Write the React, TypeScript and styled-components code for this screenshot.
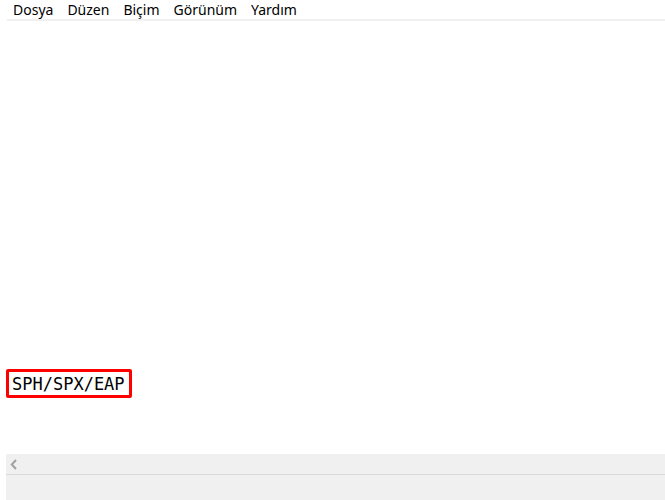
import React, { FC } from 'react';
import styled, { createGlobalStyle } from 'styled-components';

const GlobalStyle = createGlobalStyle`
  html, body {
    margin: 0;
    padding: 0;
    background: #ffffff;
  }
`;

const Window = styled.div`
  width: 665px;
  height: 500px;
  display: flex;
  flex-direction: column;
  background: #ffffff;
  overflow: hidden;
`;

const MenuBar = styled.ul`
  list-style: none;
  margin: 0 0 0 7px;
  padding: 0 0 0 6px;
  height: 19px;
  display: flex;
  align-items: center;
  gap: 14px;
  border-bottom: 2px solid #f0f0f0;
`;

const MenuItem = styled.li`
  font-family: 'Noto Sans', sans-serif;
  font-size: 14px;
  line-height: 19px;
  color: #000000;
  white-space: nowrap;
`;

const Editor = styled.div`
  flex: 1;
  padding: 348px 0 0 6px;
`;

const Highlight = styled.div`
  display: inline-flex;
  align-items: center;
  height: 23px;
  padding: 0 4px 0 3px;
  border: 3px solid #ff0000;
  border-radius: 2px;
  font-family: 'DejaVu Sans Mono', 'Liberation Mono', monospace;
  font-size: 17px;
  color: #000000;
`;

const ScrollBar = styled.div`
  margin-left: 6px;
  height: 20px;
  display: flex;
  align-items: center;
  padding-left: 4px;
  background: #f0f0f0;
  border-bottom: 1px solid #d9d9d9;
`;

const StatusBar = styled.div`
  margin-left: 6px;
  height: 25px;
  background: #f0f0f0;
`;

const menu = ['Dosya', 'Düzen', 'Biçim', 'Görünüm', 'Yardım'];

const App: FC = () => (
  <Window>
    <GlobalStyle />
    <MenuBar>
      {menu.map((m) => (
        <MenuItem key={m}>{m}</MenuItem>
      ))}
    </MenuBar>
    <Editor>
      <Highlight>SPH/SPX/EAP</Highlight>
    </Editor>
    <ScrollBar>
      <svg width="8" height="11" viewBox="0 0 8 11">
        <path d="M6 1 L1.8 5.5 L6 10" fill="none" stroke="#a0a0a0" strokeWidth="2" />
      </svg>
    </ScrollBar>
    <StatusBar />
  </Window>
);

export default App;
